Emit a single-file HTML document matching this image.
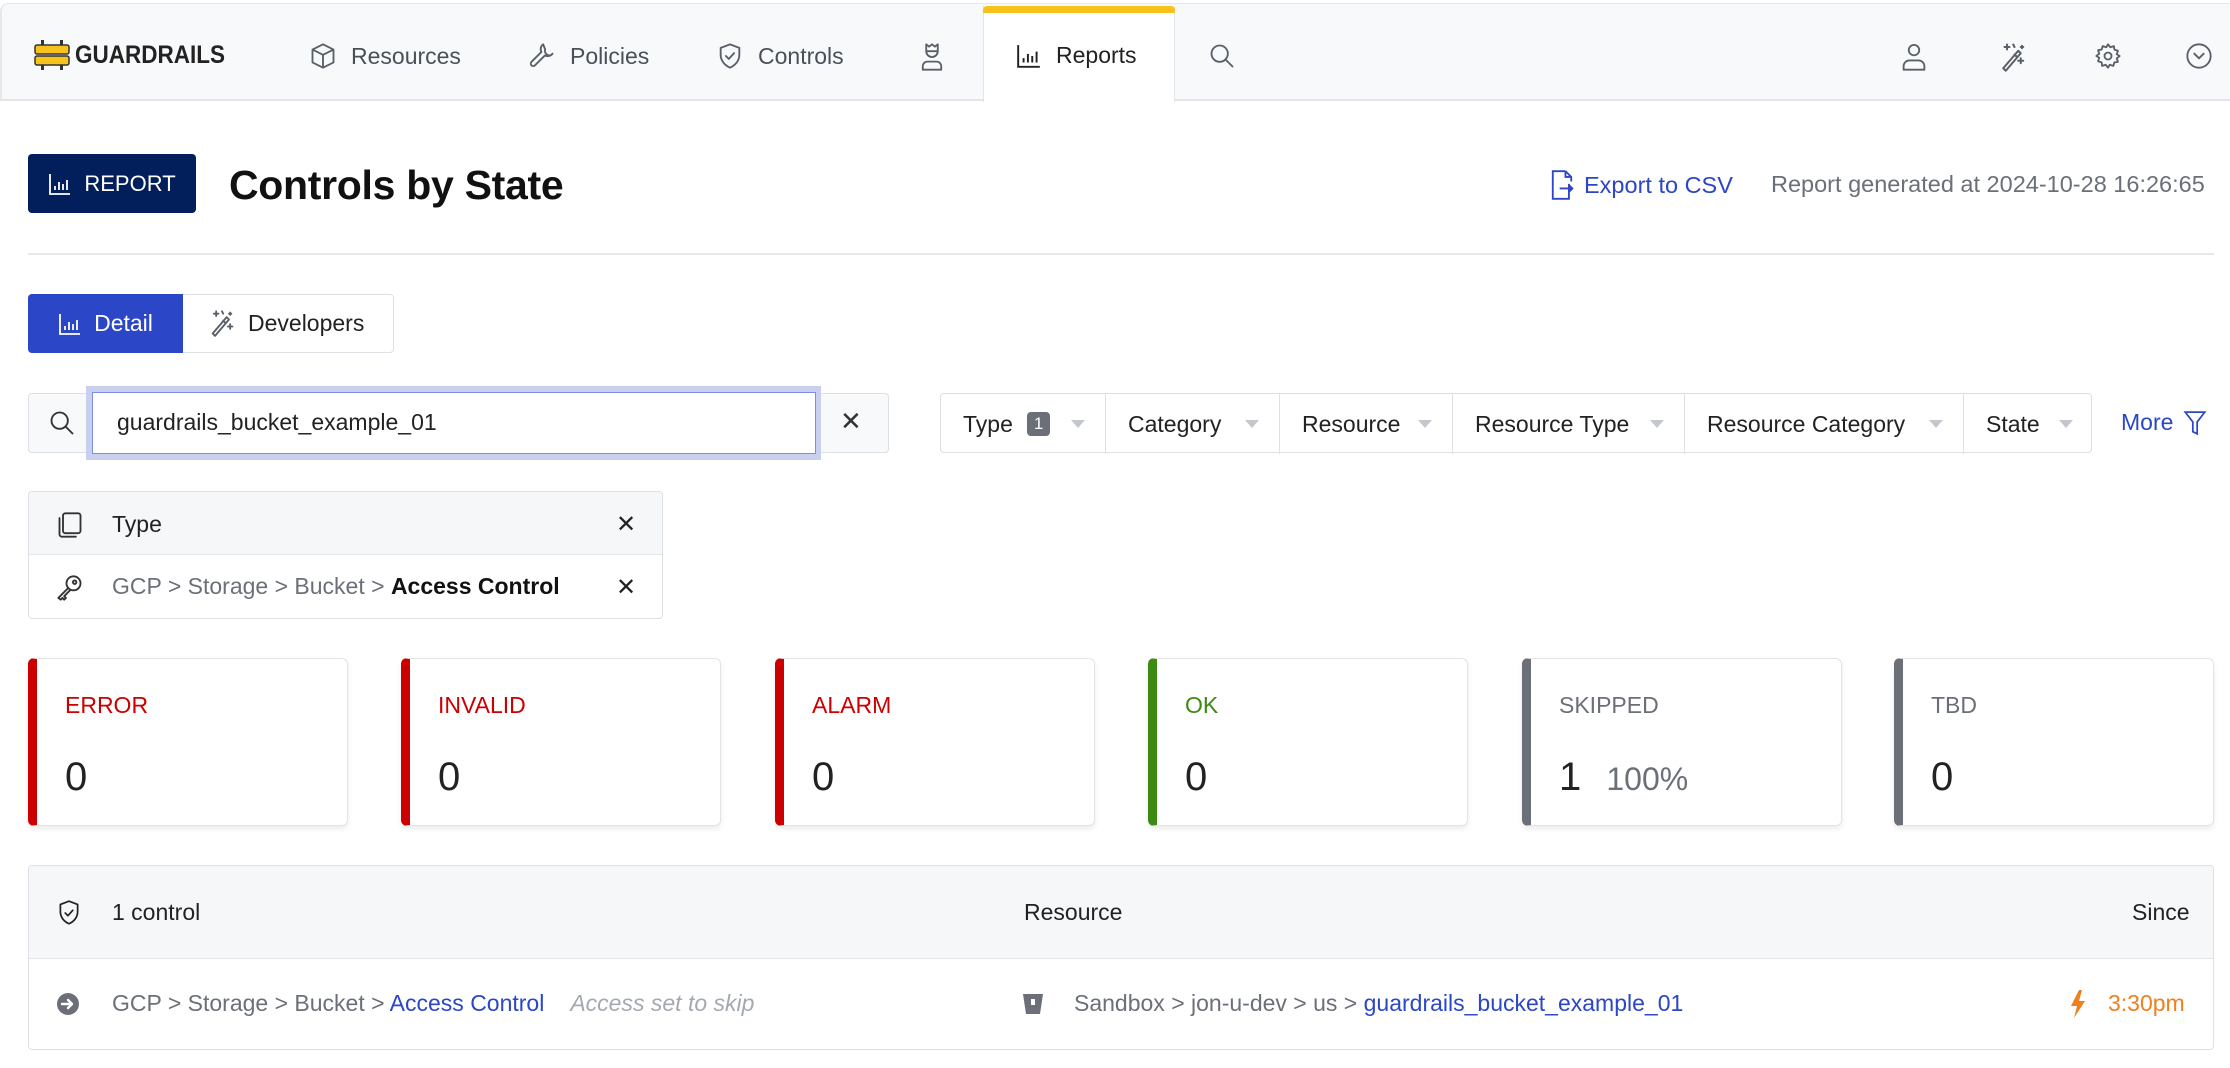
<!DOCTYPE html>
<html><head><meta charset="utf-8"><style>
*{box-sizing:border-box;margin:0;padding:0}
body{width:2230px;height:1068px;overflow:hidden;background:#fff;font-family:"Liberation Sans",sans-serif;color:#222;position:relative;font-size:23px}
.a{position:absolute}
.nav{left:0;top:3px;width:2230px;height:98px;background:#f8f9fb;border-bottom:2px solid #e3e5e8;border-top:1px solid #e8e8e8;border-left:2px solid #e8e8e8;border-radius:8px 0 0 0}
.ni{position:absolute;top:42px;display:flex;align-items:center;gap:14px;color:#4a5058;font-size:23px}
svg{display:block}
.ic{stroke:#5a6068;fill:none;stroke-width:1.6;stroke-linecap:round;stroke-linejoin:round}
.card{position:absolute;top:658px;width:320px;height:168px;background:#fff;border:1px solid #e2e4e7;border-radius:6px;box-shadow:0 3px 6px rgba(0,0,0,.08);border-left:9px solid}
.card .l{position:absolute;left:28px;top:33px;font-size:23px}
.card .n{position:absolute;left:28px;top:96px;font-size:40px;color:#222}
.fb{position:absolute;top:0;height:60px;display:flex;align-items:center;padding-left:22px;border-right:1px solid #dde0e4;font-size:23px;color:#222}
.fb .c{position:absolute;right:20px;top:26px;width:0;height:0;border-left:7px solid transparent;border-right:7px solid transparent;border-top:8px solid #c4c8cd}
</style></head><body>
<div class="a nav"></div>
<div class="a" style="left:983px;top:6px;width:192px;height:96px;background:#fff;border-left:1px solid #e3e5e8;border-right:1px solid #e3e5e8"></div>
<div class="a" style="left:983px;top:6px;width:192px;height:7px;background:#f8c21c;border-radius:4px 4px 0 0"></div>
<!-- logo -->
<div class="a" style="left:34px;top:40px"><svg width="36" height="30" viewBox="0 0 36 30"><rect x="7" y="0" width="3" height="6" fill="#333"/><rect x="26" y="0" width="3" height="6" fill="#333"/><rect x="7" y="24" width="3" height="6" fill="#333"/><rect x="26" y="24" width="3" height="6" fill="#333"/><rect x="1" y="5" width="34" height="9" rx="2" fill="#f8c21c" stroke="#333" stroke-width="1.5"/><rect x="1" y="16" width="34" height="9" rx="2" fill="#f8c21c" stroke="#333" stroke-width="1.5"/></svg></div>
<div class="a" style="left:75px;top:41px;font-size:25px;font-weight:bold;color:#222;transform:scaleX(0.9);transform-origin:0 0">GUARDRAILS</div>
<div class="ni" style="left:309px"><svg width="28" height="28" viewBox="0 0 24 24" class="ic"><path d="M12 2 3 6.5v11L12 22l9-4.5v-11zM3 6.5 12 11l9-4.5M12 11v11"/></svg>Resources</div>
<div class="ni" style="left:528px"><svg width="28" height="28" viewBox="0 0 24 24" class="ic"><path d="M14.7 6.3a4 4 0 0 0 5 5L21 10a5 5 0 0 1-6.5 1.5L6 20a2 2 0 0 1-3-3l8.5-8.5A5 5 0 0 1 13 2z"/></svg>Policies</div>
<div class="ni" style="left:716px"><svg width="28" height="28" viewBox="0 0 24 24" class="ic"><path d="M12 2 4 5v6c0 5 3.5 9 8 11 4.5-2 8-6 8-11V5z"/><path d="m8.5 12 2.5 2.5 4.5-5"/></svg>Controls</div>
<div class="ni" style="left:918px"><svg width="28" height="30" viewBox="0 0 24 26" class="ic"><path d="M7 2l2.5 2L12 2l2.5 2L17 2v6a5 5 0 0 1-10 0zM7 8h10M4 24v-3a4 4 0 0 1 4-4h8a4 4 0 0 1 4 4v3z"/></svg></div>
<div class="ni" style="left:1016px;color:#222"><svg width="26" height="26" viewBox="0 0 24 24" style="stroke:#222;fill:none;stroke-width:1.8"><path d="M2 2v20h20M7 18v-4M11 18v-8M15 18v-6M19 18v-10"/></svg>Reports</div>
<div class="ni" style="left:1208px"><svg width="28" height="28" viewBox="0 0 24 24" class="ic"><circle cx="10" cy="10" r="7"/><path d="m15 15 6 6"/></svg></div>
<div class="ni" style="left:1900px"><svg width="28" height="30" viewBox="0 0 24 26" class="ic"><circle cx="12" cy="7" r="4.5"/><path d="M3 24v-3a5 5 0 0 1 5-5h8a5 5 0 0 1 5 5v3z"/></svg></div>
<div class="ni" style="left:1997px"><svg width="30" height="30" viewBox="0 0 24 24" class="ic"><path d="M5 21 17 7l2 2L7 23zM14 10l2 2M8 2v4M6 4h4M19 13v4M17 15h4M13 2l1 2M20 3v2M19 4h2"/></svg></div>
<div class="ni" style="left:2094px"><svg width="28" height="28" viewBox="0 0 24 24" class="ic"><circle cx="12" cy="12" r="3"/><path d="M12 2l2 2.5 3-1 .5 3 3 1-1 3L22 12l-2.5 2 1 3-3 .5-1 3-3-1L12 22l-2-2.5-3 1-.5-3-3-1 1-3L2 12l2.5-2-1-3 3-.5 1-3 3 1z"/></svg></div>
<div class="ni" style="left:2185px"><svg width="28" height="28" viewBox="0 0 24 24" class="ic"><circle cx="12" cy="12" r="10"/><path d="m8 10 4 4 4-4"/></svg></div>

<!-- header -->
<div class="a" style="left:28px;top:154px;width:168px;height:59px;background:#021f5c;border-radius:4px;color:#fff;display:flex;align-items:center;justify-content:center;gap:12px;font-size:22px"><svg width="24" height="24" viewBox="0 0 24 24" style="stroke:#fff;fill:none;stroke-width:1.8"><path d="M2 2v20h20M7 18v-4M11 18v-8M15 18v-6M19 18v-10"/></svg>REPORT</div>
<div class="a" style="left:229px;top:162px;font-size:41px;font-weight:bold;color:#111;letter-spacing:-0.3px">Controls by State</div>
<div class="a" style="left:1550px;top:170px;display:flex;align-items:center;gap:10px;color:#2b46c7;font-size:23.5px"><svg width="24" height="30" viewBox="0 0 20 26" style="stroke:#2b46c7;fill:none;stroke-width:1.6"><path d="M13 1H2v24h14V12M13 1v5h5M13 1l5 5v4M8 16h11m-3-3 3 3-3 3"/></svg>Export to CSV</div>
<div class="a" style="left:1771px;top:171px;color:#6b7078;font-size:23.5px">Report generated at 2024-10-28 16:26:65</div>
<div class="a" style="left:28px;top:253px;width:2186px;height:2px;background:#e6e8eb"></div>

<!-- tabs -->
<div class="a" style="left:28px;top:294px;width:366px;height:59px;border:1px solid #dde0e4;border-radius:4px"></div>
<div class="a" style="left:28px;top:294px;width:155px;height:59px;background:#2b46c7;border-radius:4px 0 0 4px;color:#fff;display:flex;align-items:center;justify-content:center;gap:12px;font-size:23px"><svg width="24" height="24" viewBox="0 0 24 24" style="stroke:#fff;fill:none;stroke-width:1.8"><path d="M2 2v20h20M7 18v-4M11 18v-8M15 18v-6M19 18v-10"/></svg>Detail</div>
<div class="a" style="left:208px;top:309px;display:flex;align-items:center;gap:12px;font-size:23px;color:#222"><svg width="28" height="28" viewBox="0 0 24 24" class="ic"><path d="M4 21 16 7l2 2L6 23zM13 10l2 2M7 2v4M5 4h4M19 13v4M17 15h4M12 2l1 2M19 3v2M18 4h2"/></svg>Developers</div>

<!-- search -->
<div class="a" style="left:28px;top:393px;width:861px;height:60px;border:1px solid #dde0e4;border-radius:4px;background:#f8f9fb"></div>
<div class="a" style="left:48px;top:409px"><svg width="28" height="28" viewBox="0 0 24 24" class="ic" style="stroke:#333"><circle cx="10" cy="10" r="7"/><path d="m15 15 6 6"/></svg></div>
<div class="a" style="left:86px;top:386px;width:735px;height:74px;background:#c9d0ef"></div>
<div class="a" style="left:92px;top:392px;width:724px;height:62px;background:#fff;border:1.5px solid #7f8fe0"></div>
<div class="a" style="left:117px;top:409px;font-size:23px;color:#222">guardrails_bucket_example_01</div>
<div class="a" style="left:840px;top:406px;font-size:26px;color:#333">✕</div>

<!-- filters -->
<div class="a" style="left:940px;top:393px;width:1152px;height:60px;border:1px solid #dde0e4;border-radius:4px">
<div class="fb" style="left:0;width:165px">Type<span style="display:inline-block;margin-left:14px;background:#6b7078;color:#fff;font-size:17px;padding:2px 7px;border-radius:4px">1</span><span class="c"></span></div>
<div class="fb" style="left:165px;width:174px">Category<span class="c"></span></div>
<div class="fb" style="left:339px;width:173px">Resource<span class="c"></span></div>
<div class="fb" style="left:512px;width:232px">Resource Type<span class="c"></span></div>
<div class="fb" style="left:744px;width:279px">Resource Category<span class="c"></span></div>
<div class="fb" style="left:1023px;width:129px;border-right:none">State<span class="c"></span></div>
</div>
<div class="a" style="left:2121px;top:409px;color:#2b46c7;font-size:23px;display:flex;align-items:center;gap:10px">More<svg width="24" height="26" viewBox="0 0 20 24" style="stroke:#2b46c7;fill:none;stroke-width:1.6"><path d="M1 2h18l-7 9v11l-4-2v-9z"/></svg></div>

<!-- chip box -->
<div class="a" style="left:28px;top:491px;width:635px;height:128px;border:1px solid #dde0e4;border-radius:4px;overflow:hidden">
<div style="position:absolute;left:0;top:0;width:100%;height:63px;background:#f6f7f9;border-bottom:1px solid #e3e5e8"></div>
</div>
<div class="a" style="left:56px;top:511px"><svg width="28" height="28" viewBox="0 0 24 24" class="ic" style="stroke:#333"><rect x="6" y="2" width="15" height="17" rx="2"/><path d="M3 6v14a2 2 0 0 0 2 2h12"/></svg></div>
<div class="a" style="left:112px;top:511px;font-size:23px">Type</div>
<div class="a" style="left:616px;top:510px;font-size:24px">✕</div>
<div class="a" style="left:56px;top:574px"><svg width="28" height="28" viewBox="0 0 24 24" class="ic" style="stroke:#333"><circle cx="15" cy="8" r="6"/><circle cx="16" cy="7" r="1.5"/><path d="M10.5 12 2 20.5 4 22l1.5-1.5L7 22l1.5-1.5L7 19l5-5"/></svg></div>
<div class="a" style="left:112px;top:573px;font-size:23px;color:#6b7078">GCP &gt; Storage &gt; Bucket &gt; <span style="color:#111;font-weight:bold">Access Control</span></div>
<div class="a" style="left:616px;top:573px;font-size:24px">✕</div>

<!-- cards -->
<div class="card" style="left:28px;border-left-color:#c00"><div class="l" style="color:#c00">ERROR</div><div class="n">0</div></div>
<div class="card" style="left:401px;border-left-color:#c00"><div class="l" style="color:#c00">INVALID</div><div class="n">0</div></div>
<div class="card" style="left:775px;border-left-color:#c00"><div class="l" style="color:#c00">ALARM</div><div class="n">0</div></div>
<div class="card" style="left:1148px;border-left-color:#3d8a12"><div class="l" style="color:#3d8a12">OK</div><div class="n">0</div></div>
<div class="card" style="left:1522px;border-left-color:#6b7078"><div class="l" style="color:#6b7078">SKIPPED</div><div class="n">1 <span style="font-size:32px;color:#6b7078;margin-left:14px">100%</span></div></div>
<div class="card" style="left:1894px;border-left-color:#6b7078"><div class="l" style="color:#6b7078">TBD</div><div class="n">0</div></div>

<!-- table -->
<div class="a" style="left:28px;top:865px;width:2186px;height:185px;border:1px solid #dde0e4;border-radius:4px;overflow:hidden">
<div style="position:absolute;left:0;top:0;width:100%;height:93px;background:#f6f7f9;border-bottom:1px solid #e3e5e8"></div>
</div>
<div class="a" style="left:56px;top:899px"><svg width="26" height="28" viewBox="0 0 24 26" class="ic" style="stroke:#222"><path d="M12 2 4 5v7c0 5 3.5 9 8 11 4.5-2 8-6 8-11V5z"/><path d="m8.5 13 2.5 2.5 4.5-5"/></svg></div>
<div class="a" style="left:112px;top:899px;font-size:23px">1 control</div>
<div class="a" style="left:1024px;top:899px;font-size:23px">Resource</div>
<div class="a" style="left:2132px;top:899px;font-size:23px">Since</div>
<div class="a" style="left:56px;top:992px"><svg width="24" height="24" viewBox="0 0 24 24"><circle cx="12" cy="12" r="11" fill="#6b7078"/><path d="M6 12h10m-4-4 4 4-4 4" stroke="#fff" stroke-width="2.4" fill="none" stroke-linecap="round" stroke-linejoin="round"/></svg></div>
<div class="a" style="left:112px;top:990px;font-size:23px;color:#6b7078">GCP &gt; Storage &gt; Bucket &gt; <span style="color:#2b46c7">Access Control</span><span style="color:#a4a9b0;font-style:italic;margin-left:26px">Access set to skip</span></div>
<div class="a" style="left:1022px;top:992px"><svg width="22" height="24" viewBox="0 0 22 24"><path d="M1 2h20l-3 20H4z" fill="#6b7078"/><rect x="9" y="7" width="4" height="6" fill="#fff"/></svg></div>
<div class="a" style="left:1074px;top:990px;font-size:23px;color:#6b7078">Sandbox &gt; jon-u-dev &gt; us &gt; <span style="color:#2b46c7">guardrails_bucket_example_01</span></div>
<div class="a" style="left:2070px;top:990px"><svg width="16" height="28" viewBox="0 0 16 28"><path d="M9 0 1 16h6l-3 12 11-17H9l3-11z" fill="#f07f1e"/></svg></div>
<div class="a" style="left:2108px;top:990px;font-size:23px;color:#f07f1e">3:30pm</div>
</body></html>
